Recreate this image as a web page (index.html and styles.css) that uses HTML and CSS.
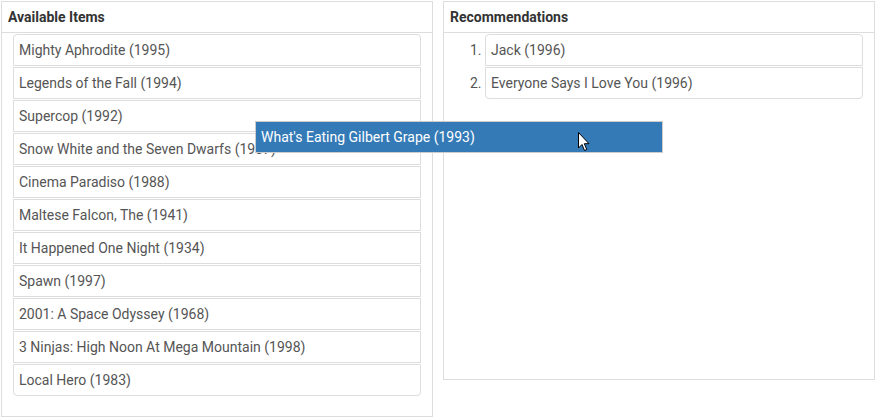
FILE: index.html
```html
<!DOCTYPE html>
<html>
<head>
<meta charset="utf-8">
<link rel="stylesheet" href="styles.css">
</head>
<body>
<div class="page">
  <section class="panel panel-left">
    <div class="panel-heading">Available Items</div>
    <ul class="items">
      <li class="item">Mighty Aphrodite (1995)</li>
      <li class="item">Legends of the Fall (1994)</li>
      <li class="item">Supercop (1992)</li>
      <li class="item">Snow White and the Seven Dwarfs (1937)</li>
      <li class="item">Cinema Paradiso (1988)</li>
      <li class="item">Maltese Falcon, The (1941)</li>
      <li class="item">It Happened One Night (1934)</li>
      <li class="item">Spawn (1997)</li>
      <li class="item">2001: A Space Odyssey (1968)</li>
      <li class="item">3 Ninjas: High Noon At Mega Mountain (1998)</li>
      <li class="item">Local Hero (1983)</li>
    </ul>
  </section>
  <section class="panel panel-right">
    <div class="panel-heading">Recommendations</div>
    <ol class="items ranked">
      <li class="item">Jack (1996)</li>
      <li class="item">Everyone Says I Love You (1996)</li>
    </ol>
  </section>
</div>
<div class="drag-helper">What's Eating Gilbert Grape (1993)</div>
<svg class="cursor" width="13" height="20" viewBox="0 0 13 20">
  <path d="M0.5 0.5 L0.5 16 L4 12.5 L6.5 18.5 L8.8 17.5 L6.3 11.7 L11 11.7 Z" fill="#fff" stroke="#000" stroke-width="1" stroke-linejoin="miter"/>
</svg>
</body>
</html>
```
FILE: styles.css
```css
html, body {
  margin: 0;
  padding: 0;
  background: #fff;
}
body {
  font-family: Roboto, "Liberation Sans", sans-serif;
  font-size: 14px;
  color: #555;
}
.page {
  display: flex;
  align-items: flex-start;
  gap: 10px;
  padding: 1px;
}
.panel {
  width: 432px;
  box-sizing: border-box;
  border: 1px solid #ddd;
  background: #fff;
}
.panel-left {
  height: 416px;
}
.panel-right {
  height: 379px;
}
.panel-heading {
  height: 30px;
  line-height: 30px;
  padding: 0 6px;
  border-bottom: 1px solid #ddd;
  font-weight: bold;
  color: #333;
}
.items {
  list-style: none;
  margin: 0;
  padding: 1px 11px 0 11px;
}
.item {
  box-sizing: border-box;
  height: 32px;
  line-height: 30px;
  margin-bottom: 1px;
  padding: 0 5px;
  border: 1px solid #ddd;
  background: #fff;
}
.item:first-child {
  border-top-left-radius: 4px;
  border-top-right-radius: 4px;
}
.item:last-child {
  border-bottom-left-radius: 4px;
  border-bottom-right-radius: 4px;
}
.ranked {
  list-style: decimal;
  padding-left: 41px;
}
.ranked .item::marker {
  color: #555;
}
.drag-helper {
  position: absolute;
  left: 255px;
  top: 121px;
  width: 408px;
  height: 32px;
  box-sizing: border-box;
  line-height: 30px;
  padding: 0 5px;
  background: #337ab7;
  border: 1px solid #ccc;
  color: #fff;
}
.cursor {
  position: absolute;
  left: 578px;
  top: 132px;
}
```
